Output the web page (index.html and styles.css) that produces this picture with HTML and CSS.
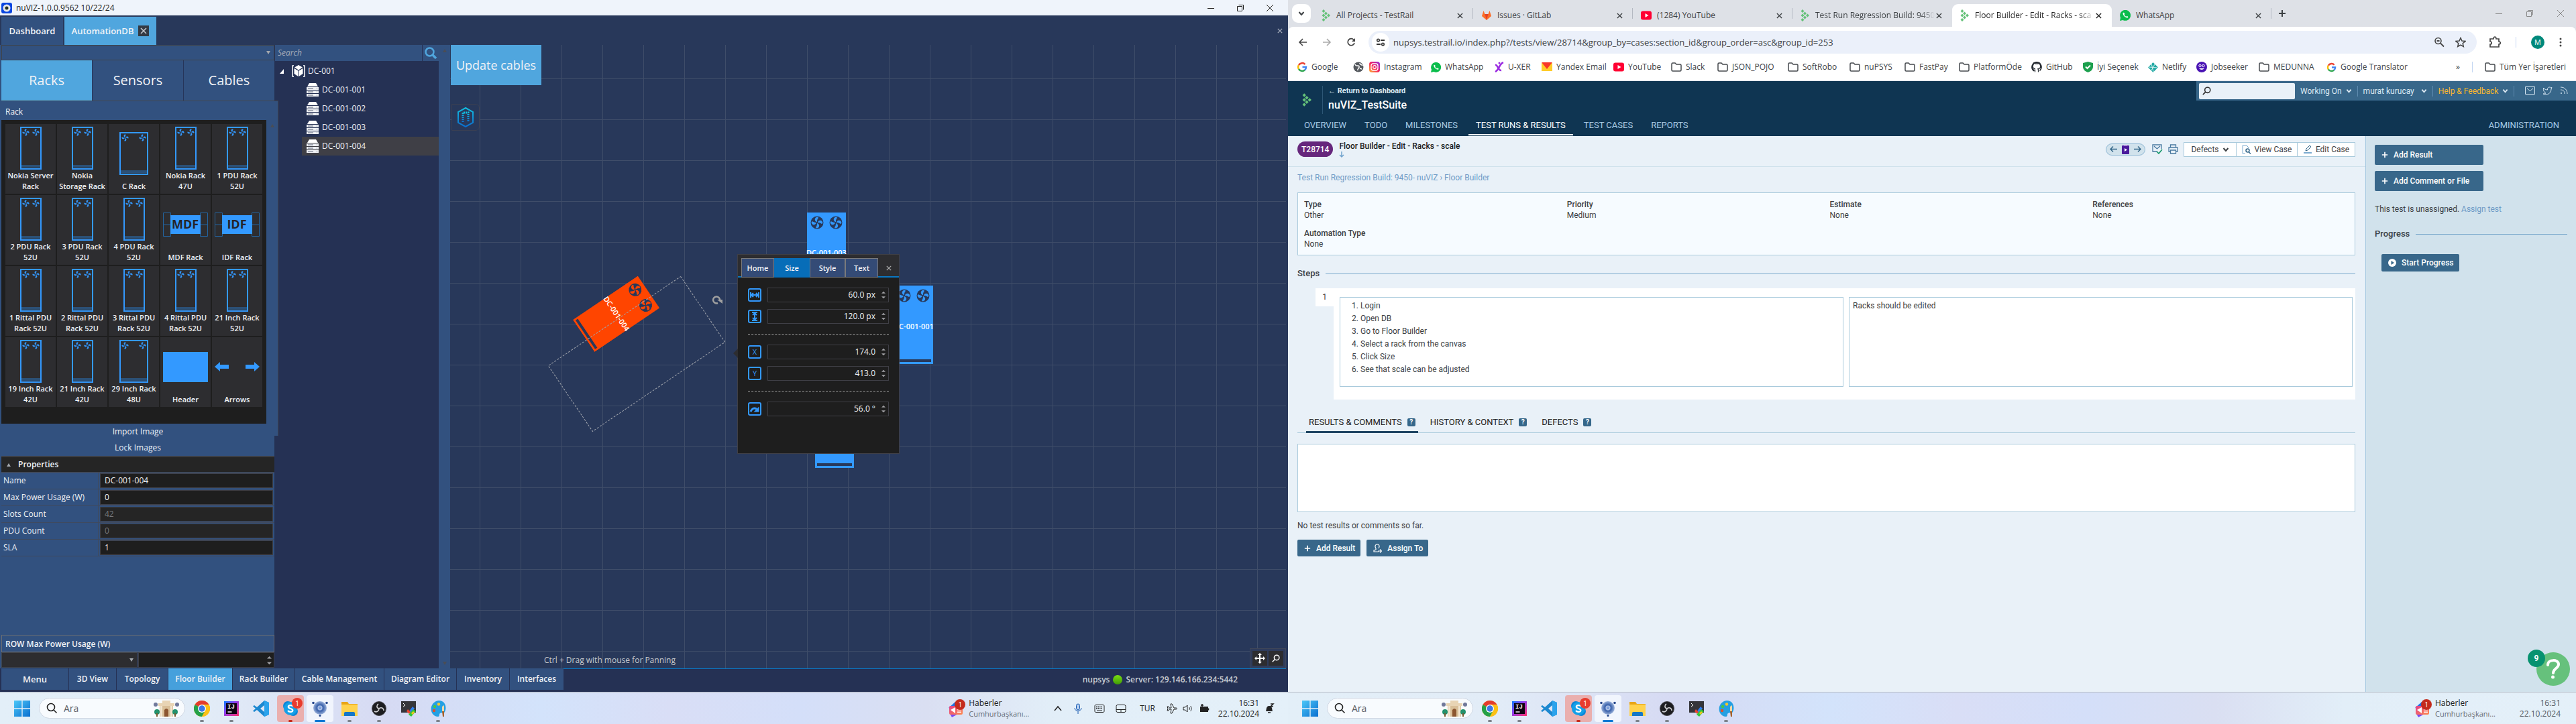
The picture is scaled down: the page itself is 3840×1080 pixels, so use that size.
FILE: index.html
```html
<!DOCTYPE html>
<html lang="tr">
<head>
<meta charset="utf-8">
<title>nuVIZ and TestRail</title>
<link rel="stylesheet" href="styles.css">
</head>
<body>
<svg class="defs" aria-hidden="true">
  <defs>
    <linearGradient id="gWin" x1="0" y1="0" x2="1" y2="1"><stop offset="0" stop-color="#4cc8f8"/><stop offset="1" stop-color="#0a6fd0"/></linearGradient>
    <linearGradient id="gInsta" x1="0" y1="1" x2="1" y2="0"><stop offset="0" stop-color="#fdb833"/><stop offset=".5" stop-color="#f5225f"/><stop offset="1" stop-color="#8a2be2"/></linearGradient>
    <linearGradient id="gIj" x1="0" y1="0" x2="1" y2="1"><stop offset="0" stop-color="#0a7cff"/><stop offset=".4" stop-color="#8a3ef0"/><stop offset="1" stop-color="#fc2f6c"/></linearGradient>
    <linearGradient id="gNews" x1="0" y1="0" x2="1" y2="1"><stop offset="0" stop-color="#e0408c"/><stop offset="1" stop-color="#ff8a4c"/></linearGradient>
    <linearGradient id="gHex" x1="0" y1="0" x2="0" y2="1"><stop offset="0" stop-color="#13bede"/><stop offset="1" stop-color="#0b6fd0"/></linearGradient>
    <radialGradient id="gSet"><stop offset="0" stop-color="#8fb0e8"/><stop offset=".5" stop-color="#3e64ac"/><stop offset="1" stop-color="#9db4dc"/></radialGradient>
  </defs>
  <symbol id="fan" viewBox="0 0 20 20"><path d="M10 9C6 8 5 3 9 1c3-1 4 1 2 3-1 2-1 3-1 5zM11 10c1-4 6-5 8-1 1 3-1 4-3 2-2-1-3-1-5-1zM10 11c4 1 5 6 1 8-3 1-4-1-2-3 1-2 1-3 1-5zM9 10c-1 4-6 5-8 1-1-3 1-4 3-2 2 1 3 1 5 1z"/></symbol>
  <symbol id="rack" viewBox="0 0 32 64"><path d="M1 1h30v62H1z" fill="none" stroke="#3399ff" stroke-width="2"/><path d="M2 58h28M2 60h28" stroke="#2a75bd"/><g fill="#3399ff"><use href="#fan" x="3" y="3" width="11" height="11"/><use href="#fan" x="18" y="3" width="11" height="11"/></g></symbol>
  <symbol id="rackw" viewBox="0 0 43 64"><path d="M1 1h41v62H1z" fill="none" stroke="#3399ff" stroke-width="2"/><path d="M2 58h39M2 60h39" stroke="#2a75bd"/><g fill="#3399ff"><use href="#fan" x="3" y="3" width="11" height="11"/><use href="#fan" x="29" y="3" width="11" height="11"/></g></symbol>
  <symbol id="rackfull" viewBox="0 0 58 117"><path d="M0 0h58v117H0z"/><path d="M3 110h52v4H3z" fill="#28385a"/><circle cx="15" cy="15" r="9.500" fill="#28385a"/><circle cx="43" cy="15" r="9.500" fill="#28385a"/><use href="#fan" x="6" y="6" width="18" height="18"/><use href="#fan" x="34" y="6" width="18" height="18"/></symbol>
  <symbol id="server" viewBox="0 0 18 21"><path d="M4 0h10l3 5H1z" fill="#fff"/><path d="M0 6h18v4H0zM0 11h18v4H0zM0 16h18v4H0z" fill="#eef0f4"/><path d="M2 8h8M2 13h8M2 18h8M15 8h1M15 13h1M15 18h1" stroke="#5c6478"/></symbol>
  <symbol id="testrail" viewBox="0 0 14 18"><g fill="#65c179"><path d="M3 0l2.500 2.500L3 5 .5 2.500zM6.500 3.500L9 6 6.500 8.500 4 6zM10.500 6.500L13 9l-2.500 2.500L8 9zM6.500 9.500L9 12l-2.500 2.500L4 12zM3 13l2.500 2.500L3 18 .5 15.500zM3 6.500L5.500 9 3 11.500.5 9z"/></g></symbol>
  <symbol id="x" viewBox="0 0 10 10"><path d="M1 1l8 8M9 1L1 9" stroke="currentColor" stroke-width="1.500" fill="none"/></symbol>
  <symbol id="chev" viewBox="0 0 10 10"><path d="M1.500 3L5 7l3.500-4" stroke="currentColor" stroke-width="2" fill="none"/></symbol>
  <symbol id="plus" viewBox="0 0 12 12"><path d="M6 1v10M1 6h10" stroke="currentColor" stroke-width="2"/></symbol>
  <symbol id="folder" viewBox="0 0 16 14"><path d="M1 2.500C1 1.500 1.500 1 2.500 1h3.500l2 2h5.500c1 0 1.500.500 1.500 1.500v7c0 1-.500 1.500-1.500 1.500h-11C1.500 13 1 12.500 1 11.500z" fill="none" stroke="#45494e" stroke-width="1.500"/></symbol>
  <symbol id="youtube" viewBox="0 0 16 16"><rect width="16" height="13" y="1.500" rx="3" fill="#f03"/><path d="M6.500 5v6l5-3z" fill="#fff"/></symbol>
  <symbol id="whatsapp" viewBox="0 0 16 16"><path d="M0 16l1-4.500A8 8 0 1 1 4.500 15z" fill="#0bbd4c"/><path d="M5 4c-2 2 3 8 6.500 7.500 2-1 0-2.500-1-2.500l-1 .800C8 9 7 8 6.500 7l.700-1C7 4.500 6 3.500 5 4z" fill="#fff"/></symbol>
  <symbol id="google" viewBox="0 0 16 16"><g fill="none" stroke-width="2.500"><path d="M12.500 4A6 6 0 0 0 3 5" stroke="#ea4335"/><path d="M3 5a6 6 0 0 0 0 6" stroke="#fbbc04"/><path d="M3 11a6 6 0 0 0 9 1.500" stroke="#34a853"/><path d="M12 12.500A6 6 0 0 0 14 8H8.500" stroke="#4285f4"/></g></symbol>
  <symbol id="mag" viewBox="0 0 16 16"><circle cx="9.500" cy="6.500" r="5" fill="none" stroke="currentColor" stroke-width="2"/><path d="M6 10l-5 5" stroke="currentColor" stroke-width="2"/></symbol>
  <symbol id="spin" viewBox="0 0 8 16"><path d="M0 5l4-4 4 4zM0 11l4 4 4-4z" fill="#a0a0a4"/></symbol>
  <symbol id="i-win" viewBox="0 0 24 24"><path d="M0 0h11.300v11.300H0zM12.700 0H24v11.300H12.700zM0 12.700h11.300V24H0zM12.700 12.700H24V24H12.700z" fill="url(#gWin)"/></symbol>
  <symbol id="i-castle" viewBox="0 0 40 26"><path d="M10 8h20v17H10z" fill="#d9bf98"/><path d="M8 5h24v4H8zM14 1h12v5H14z" fill="#e8d4b4"/><path d="M11 9h3v16h-3zM26 9h3v16h-3z" fill="#f2e6d0"/><path d="M17 25V15q3-4 6 0v10z" fill="#8c5630"/><circle cx="6" cy="18" r="4" fill="#23926d"/><circle cx="33" cy="18" r="4" fill="#23926d"/><path d="M6 20v5M33 20v5" stroke="#7a5a30" stroke-width="2"/><circle cx="4" cy="7" r="3" fill="#70789a"/><circle cx="36" cy="7" r="3" fill="#70789a"/></symbol>
  <symbol id="i-chrome" viewBox="0 0 24 24"><circle cx="12" cy="12" r="12" fill="#fbc116"/><path d="M12 12L1.600 6A12 12 0 0 1 22.400 6z" fill="#e33b2e"/><path d="M12 12L1.600 6A12 12 0 0 0 12 24l5-9z" fill="#24a148"/><path d="M12 6h10.400A12 12 0 0 1 12 24l5.200-9z" fill="#fbc116"/><circle cx="12" cy="12" r="6" fill="#fff"/><circle cx="12" cy="12" r="4.700" fill="#3b78e7"/></symbol>
  <symbol id="i-ij" viewBox="0 0 24 24"><path d="M1 1h22v22H1z" fill="url(#gIj)"/><path d="M4 4h16v16H4z" fill="#0c0312"/><text x="6" y="12" fill="#fff" font-family="Liberation Mono" font-size="9" font-weight="700">IJ</text><path d="M6.500 17h6" stroke="#fff" stroke-width="1.400"/></symbol>
  <symbol id="i-code" viewBox="0 0 24 24"><path d="M17 0l7 3v18l-7 3L6 14l-4 3-2-1.500L4 12 0 8.500 2 7l4 3zM17 7l-6 5 6 5z" fill="#1c88d0" fill-rule="evenodd"/><path d="M17 0l7 3v18l-7 3z" fill="#2ba3ec"/></symbol>
  <symbol id="i-skype" viewBox="0 0 24 24"><circle cx="8" cy="8" r="7" fill="#0b86d8"/><circle cx="16" cy="16" r="7" fill="#0b86d8"/><circle cx="12" cy="12" r="10" fill="#14a0e8"/><path d="M15.500 8.500C14 6.500 9 6.500 8.800 9.500c0 3 6.500 2 6.500 5 0 3-5.500 3-7.200.500" stroke="#fff" stroke-width="2.300" fill="none"/></symbol>
  <symbol id="i-set" viewBox="0 0 24 24"><circle cx="12" cy="11" r="10" fill="url(#gSet)"/><circle cx="12" cy="11" r="3" fill="none" stroke="#cfdcf5"/><g fill="#23458c"><circle cx="2" cy="3.500" r="1.800"/><circle cx="22" cy="3.500" r="1.800"/><circle cx="12" cy="22.500" r="1.500"/></g></symbol>
  <symbol id="i-folder" viewBox="0 0 24 24"><path d="M0 2h9l2 3h13v18H0z" fill="#e8a517"/><path d="M0 6h24v17H0z" fill="#ffd24d"/><path d="M4 23v-4q0-2 2-2h12q2 0 2 2v4z" fill="#1577c8"/></symbol>
  <symbol id="i-obs" viewBox="0 0 24 24"><circle cx="12" cy="12" r="10.500" fill="#1d1d20" stroke="#4a4a50"/><path d="M12 12c-4-1-4-5-1-7M12 12c4-3 7 0 7 3M12 12c0 4-4 6-7 4" stroke="#cfcfd2" stroke-width="1.600" fill="none"/></symbol>
  <symbol id="i-term" viewBox="0 0 24 24"><path d="M1 1h22v17H1z" fill="#35353a"/><path d="M4 4l3 3-3 2" stroke="#fff" fill="none"/><path d="M12 17l6-8 3 3-6 7z" fill="#2d7df5"/><path d="M11 13l4 4-2 3-4-4z" fill="#e8442e"/><path d="M19 13l4 3-7 8-4-3z" fill="#31c83a"/><path d="M16 19l3-3 2 2-3 3z" fill="#f7c51c"/></symbol>
  <symbol id="i-paint" viewBox="0 0 24 24"><path d="M13 0C24 0 25 12 22 17c-2 3-5 0-7 2-2 1 0 5-3 5C-2 23-2 2 13 0z" fill="#25a0e2"/><circle cx="7" cy="9" r="2.200" fill="#47c846"/><circle cx="13" cy="5.500" r="2.200" fill="#f5c82c"/><circle cx="6" cy="15" r="2.200" fill="#e2502d"/><path d="M18 9l3-2v9h-3z" fill="#f0d8a8"/><path d="M18 16h3v8h-2z" fill="#a5622c"/></symbol>
  <symbol id="i-news" viewBox="0 0 24 28"><path d="M1 13l10-9 9 4-3 8z" fill="#1c74e8"/><path d="M2 20h17l-13 7z" fill="#7b4bf2"/><rect x="2" y="10" width="20" height="13" rx="2" fill="url(#gNews)"/><path d="M4 16l7-4v9zM14 15h6v1.500h-6zM14 18.500h6V20h-6z" fill="#fff"/></symbol>
</svg>

<main class="desktop">
<section class="monitor">
  <div class="app">
    <header class="titlebar">
      <svg width="16" height="16" viewBox="0 0 16 16"><rect width="16" height="16" rx="3" fill="#0a46e0"/><circle cx="8" cy="8" r="5.500" fill="#e8e8e8"/><circle cx="8" cy="8" r="2.500" fill="#26331f"/></svg>
      <h1>nuVIZ-1.0.0.9562 10/22/24</h1>
      <div class="winctl"><button aria-label="Minimize"><svg width="10" height="10" viewBox="0 0 10 10"><path d="M0 5.500h10" stroke="#222"/></svg></button><button aria-label="Restore"><svg width="10" height="10" viewBox="0 0 10 10"><path d="M.5 2.500h7v7h-7zM2.500.5h7v7" fill="none" stroke="#222"/></svg></button><button aria-label="Close"><svg width="10" height="10" viewBox="0 0 10 10"><path d="M0 0l10 10M10 0L0 10" stroke="#222"/></svg></button></div>
    </header>
    <nav class="doctabs">
      <button class="doctab">Dashboard</button>
      <button class="doctab on">AutomationDB <span class="closebox"><svg width="10" height="10"><use href="#x"/></svg></span></button>
      <button class="dismiss" aria-label="Close document"><svg width="8" height="8"><use href="#x"/></svg></button>
    </nav>
    <div class="work">
      <div class="side">
        <button class="combo" aria-label="Category"><i class="tri"></i></button>
        <div class="kinds"><button class="on">Racks</button><button>Sensors</button><button>Cables</button></div>
        <section class="library">
          <h2>Rack</h2>
          <div class="shelf">
            <ul class="cells">
              <li><svg width="32" height="64"><use href="#rack"/></svg><span>Nokia Server<br>Rack</span></li>
              <li><svg width="32" height="64"><use href="#rack"/></svg><span>Nokia<br>Storage Rack</span></li>
              <li><svg width="43" height="64"><use href="#rackw"/></svg><span>C Rack</span></li>
              <li><svg width="32" height="64"><use href="#rack"/></svg><span>Nokia Rack<br>47U</span></li>
              <li><svg width="32" height="64"><use href="#rack"/></svg><span>1 PDU Rack<br>52U</span></li>
              <li><svg width="32" height="64"><use href="#rack"/></svg><span>2 PDU Rack<br>52U</span></li>
              <li><svg width="32" height="64"><use href="#rack"/></svg><span>3 PDU Rack<br>52U</span></li>
              <li><svg width="32" height="64"><use href="#rack"/></svg><span>4 PDU Rack<br>52U</span></li>
              <li><svg width="67" height="36"><path d="M.5.5h11v35H.5zM55.500.5h11v35h-11zM.5 18h66" fill="none" stroke="#23649f"/><path d="M11 4h45v28H11z" fill="#3399ff"/><text x="33" y="24" class="tag">MDF</text></svg><span>MDF Rack</span></li>
              <li><svg width="67" height="36"><path d="M.5.5h11v35H.5zM55.500.5h11v35h-11zM.5 18h66" fill="none" stroke="#23649f"/><path d="M11 4h45v28H11z" fill="#3399ff"/><text x="33" y="24" class="tag">IDF</text></svg><span>IDF Rack</span></li>
              <li><svg width="32" height="64"><use href="#rack"/></svg><span>1 Rittal PDU<br>Rack 52U</span></li>
              <li><svg width="32" height="64"><use href="#rack"/></svg><span>2 Rittal PDU<br>Rack 52U</span></li>
              <li><svg width="32" height="64"><use href="#rack"/></svg><span>3 Rittal PDU<br>Rack 52U</span></li>
              <li><svg width="32" height="64"><use href="#rack"/></svg><span>4 Rittal PDU<br>Rack 52U</span></li>
              <li><svg width="32" height="64"><use href="#rack"/></svg><span>21 Inch Rack<br>52U</span></li>
              <li><svg width="32" height="64"><use href="#rack"/></svg><span>19 Inch Rack<br>42U</span></li>
              <li><svg width="32" height="64"><use href="#rack"/></svg><span>21 Inch Rack<br>42U</span></li>
              <li><svg width="43" height="64"><use href="#rackw"/></svg><span>29 Inch Rack<br>48U</span></li>
              <li><svg width="67" height="45"><path d="M0 0h67v45H0z" fill="#3399ff"/></svg><span>Header</span></li>
              <li><svg width="67" height="14"><path d="M0 7l8-7v4h13v6H8v4zM67 7l-8-7v4H46v6h13v4z" fill="#3399ff"/></svg><span>Arrows</span></li>
            </ul>
            <div class="scroll"><i class="tri up dark"></i></div>
          </div>
        </section>
        <div class="imgacts"><button>Import Image</button><button>Lock Images</button></div>
        <section class="props">
          <h2><i class="tri up"></i>Properties</h2>
          <div class="prop"><label for="p1">Name</label><input id="p1" value="DC-001-004"></div>
          <div class="prop"><label for="p2">Max Power Usage (W)</label><input id="p2" value="0"></div>
          <div class="prop"><label for="p3">Slots Count</label><input id="p3" value="42" disabled></div>
          <div class="prop"><label for="p4">PDU Count</label><input id="p4" value="0" disabled></div>
          <div class="prop"><label for="p5">SLA</label><input id="p5" value="1"></div>
        </section>
        <h3 class="rowmax">ROW Max Power Usage (W)</h3>
        <div class="rowset"><button class="combo dim" aria-label="Row"><i class="tri"></i></button><div class="num"><input aria-label="Row max power"><svg width="7" height="14"><use href="#spin"/></svg></div></div>
      </div>
      <div class="tree">
        <div class="find"><input placeholder="Search" aria-label="Search tree"><button aria-label="Search"><svg width="19" height="19" viewBox="0 0 19 19"><circle cx="7.500" cy="7.500" r="6" fill="none" stroke="#50a6de" stroke-width="2.500"/><path d="M12 12l5 5" stroke="#50a6de" stroke-width="3.500"/></svg></button></div>
        <ul>
          <li class="root"><svg width="6" height="7"><path d="M6 0v7H0z" fill="#fff"/></svg><svg width="20" height="18" viewBox="0 0 20 18"><path d="M3 1H1v16h2M17 1h2v16h-2" fill="none" stroke="#fff" stroke-width="1.500"/><path d="M10 0l6 3.500-6 4-6-4zM3.500 5L9.500 8.500V17l-6-4zM16.500 5l-6 3.500V17l6-4z" fill="#fff"/></svg>DC-001</li>
          <li><svg width="18" height="21"><use href="#server"/></svg>DC-001-001</li>
          <li><svg width="18" height="21"><use href="#server"/></svg>DC-001-002</li>
          <li><svg width="18" height="21"><use href="#server"/></svg>DC-001-003</li>
          <li class="sel"><svg width="18" height="21"><use href="#server"/></svg>DC-001-004</li>
        </ul>
      </div>
      <div class="scroll tall"><i class="tri up dark"></i><i class="tri dark"></i></div>
      <div class="canvas">
        <svg class="scene" width="1240" height="920">
          <g fill="#3399ff">
            <use href="#rackfull" x="532" y="250" width="58" height="117"/>
            <use href="#rackfull" x="662" y="359" width="58" height="117"/>
            <use href="#rackfull" x="544" y="514" width="58" height="117"/>
          </g>
          <text x="561" y="314">DC-001-003</text>
          <text x="691" y="424">DC-001-001</text>
          <g transform="translate(248 401) rotate(56)"><use href="#rackfull" x="-29" y="-58" width="58" height="117" fill="#ff4500"/><text x="0" y="4">DC-001-004</text></g>
          <rect x="-59" y="-119" width="118" height="238" transform="translate(278 461) rotate(56)" fill="none" stroke="#a0a4ac" stroke-dasharray="3 2"/>
          <path d="M399 385a5 5 0 1 1 3-4" fill="none" stroke="#a0a0a0" stroke-width="2.500"/><path d="M398 380h8v6z" fill="#a0a0a0"/>
        </svg>
        <button class="update">Update cables</button>
        <button class="badge" aria-label="nuPSYS"><svg width="26" height="30" viewBox="0 0 26 30"><path d="M13 1l11 6v16l-11 6-11-6V7z" fill="none" stroke="url(#gHex)" stroke-width="2"/><path d="M9 22V8h8v14" fill="none" stroke="url(#gHex)" stroke-width="3" stroke-dasharray="2 1"/></svg></button>
        <p class="hint">Ctrl + Drag with mouse for Panning</p>
        <div class="tools"><button aria-label="Pan"><svg width="16" height="16" viewBox="0 0 16 16"><path d="M8 1v14M1 8h14" stroke="#fff" stroke-width="2"/><path d="M8 0l3 3H5zM8 16l3-3H5zM0 8l3-3v6zM16 8l-3-3v6z" fill="#fff"/></svg></button><button aria-label="Zoom"><svg width="12" height="12"><use href="#mag"/></svg></button></div>
        <div class="popup">
          <div class="poptabs"><button>Home</button><button class="on">Size</button><button>Style</button><button>Text</button><button class="popx" aria-label="Close"><svg width="8" height="8"><use href="#x"/></svg></button></div>
          <div class="popbody">
            <div class="field"><svg class="ic" width="20" height="20" viewBox="0 0 20 20"><path d="M4 6v8M16 6v8M5 10h10M8 7l-3 3 3 3M12 7l3 3-3 3"/></svg><div class="num"><input aria-label="Width" value="60.0 px"><svg width="6" height="14"><use href="#spin"/></svg></div></div>
            <div class="field"><svg class="ic" width="20" height="20" viewBox="0 0 20 20"><path d="M6 4h8M6 16h8M10 5v10M7 8l3-3 3 3M7 12l3 3 3-3"/></svg><div class="num"><input aria-label="Height" value="120.0 px"><svg width="6" height="14"><use href="#spin"/></svg></div></div>
            <hr>
            <div class="field"><svg class="ic" width="20" height="20" viewBox="0 0 20 20"><text x="10" y="14">X</text></svg><div class="num"><input aria-label="X" value="174.0"><svg width="6" height="14"><use href="#spin"/></svg></div></div>
            <div class="field"><svg class="ic" width="20" height="20" viewBox="0 0 20 20"><text x="10" y="14">Y</text></svg><div class="num"><input aria-label="Y" value="413.0"><svg width="6" height="14"><use href="#spin"/></svg></div></div>
            <hr>
            <div class="field"><svg class="ic" width="20" height="20" viewBox="0 0 20 20"><path d="M4 14c2-5 5-6 9-4" stroke-width="3"/><path d="M16.500 6.500v8h-8z" fill="#3399ff" stroke="none"/></svg><div class="num"><input aria-label="Rotation" value="56.0 °"><svg width="6" height="14"><use href="#spin"/></svg></div></div>
          </div>
        </div>
      </div>
    </div>
    <footer class="modes">
      <button class="first">Menu</button><button>3D View</button><button>Topology</button><button class="on">Floor Builder</button><button>Rack Builder</button><button>Cable Management</button><button>Diagram Editor</button><button>Inventory</button><button>Interfaces</button>
      <p class="status">nupsys <i></i> Server: 129.146.166.234:5442</p>
    </footer>
  </div>
  <footer class="taskbar">
    <button class="start" aria-label="Start"><svg width="24" height="24"><use href="#i-win"/></svg></button>
    <label class="tsearch"><svg width="17" height="17" viewBox="0 0 17 17"><circle cx="7" cy="7" r="5.500" fill="none" stroke="#222" stroke-width="1.600"/><path d="M11 11l4.500 4.500" stroke="#222" stroke-width="1.600"/></svg><input placeholder="Ara" aria-label="Ara"><svg width="40" height="26"><use href="#i-castle"/></svg></label>
    <div class="apps">
      <button class="run" aria-label="Chrome"><svg width="24" height="24"><use href="#i-chrome"/></svg></button><button class="run" aria-label="IntelliJ"><svg width="24" height="24"><use href="#i-ij"/></svg></button><button aria-label="VS Code"><svg width="24" height="24"><use href="#i-code"/></svg></button><button class="run alert" aria-label="Skype"><svg width="24" height="24"><use href="#i-skype"/></svg><b class="cnt">1</b></button><button class="run cur" aria-label="nuVIZ"><svg width="24" height="24"><use href="#i-set"/></svg></button><button class="run" aria-label="Files"><svg width="24" height="24"><use href="#i-folder"/></svg></button><button class="run" aria-label="OBS"><svg width="24" height="24"><use href="#i-obs"/></svg></button><button aria-label="Terminal"><svg width="24" height="24"><use href="#i-term"/></svg></button><button class="run" aria-label="Paint"><svg width="24" height="24"><use href="#i-paint"/></svg></button>
    </div>
    <div class="news"><span class="newsic"><svg width="24" height="28"><use href="#i-news"/></svg><b class="cnt">1</b></span><p>Haberler<br><small>Cumhurbaşkanı...</small></p></div>
    <div class="tray">
      <svg width="12" height="12" viewBox="0 0 12 12"><path d="M1 9l5-6 5 6" fill="none" stroke="#222" stroke-width="1.500"/></svg>
      <svg width="16" height="16" viewBox="0 0 16 16"><rect x="5.500" y="1" width="5" height="9" rx="2.500" fill="#b9d2f2" stroke="#1658b0"/><path d="M3 7c0 6 10 6 10 0M8 12v4" fill="none" stroke="#1658b0"/></svg>
      <svg width="16" height="16" viewBox="0 0 16 16"><rect x="1" y="2.500" width="14" height="11" rx="1.500" fill="none" stroke="#222"/><path d="M3 5.500h10M3 8h10" stroke="#222" stroke-width="1.500" stroke-dasharray="1.500 1"/><path d="M4 11h8" stroke="#222"/></svg>
      <svg width="16" height="16" viewBox="0 0 16 16"><rect x="1" y="2.500" width="14" height="11" rx="2" fill="none" stroke="#222"/><path d="M1 9.500h14M8 9.500v4" stroke="#222"/></svg>
      <span class="lang">TUR</span>
      <span class="trio"><svg width="16" height="16" viewBox="0 0 16 16"><path d="M6 1h2l3 6h3c2 0 2 2 0 2h-3l-3 6H6l1-6H4l-1 2H1l1-3-1-3h2l1 2h3z" fill="none" stroke="#222"/></svg><svg width="16" height="16" viewBox="0 0 16 16"><path d="M1 6h2.500L7 3v10l-3.500-3H1zM9.500 6c1 1 1 3 0 4M11.500 4c2 2 2 6 0 8" fill="none" stroke="#222"/></svg><svg width="16" height="16" viewBox="0 0 16 16"><path d="M2 5h12v8H2z" fill="#222"/><path d="M14.500 7.500v3M5 1v6M3 3h4" stroke="#222" stroke-width="1.500"/></svg></span>
    </div>
    <p class="clock">16:31<br>22.10.2024</p>
    <svg class="bell" width="15" height="16" viewBox="0 0 15 16"><path d="M2 12c1-2 0-8 5-8s4 6 5 8z" fill="#222"/><path d="M5 14h4M9 1h4L9 5h4" stroke="#222" stroke-width="1.500" fill="none"/></svg>
  </footer>
</section>

<section class="monitor">
  <div class="browser">
    <header class="strip">
      <button class="tabmenu" aria-label="Search tabs"><svg width="10" height="10"><use href="#chev"/></svg></button>
      <div class="btabs">
        <div class="btab"><svg width="14" height="18"><use href="#testrail"/></svg><span>All Projects - TestRail</span><button aria-label="Close tab"><svg width="9" height="9"><use href="#x"/></svg></button></div>
        <div class="btab"><svg width="16" height="16" viewBox="0 0 16 16"><path d="M1 9L3.500 1 5.500 6h5L12.500 1 15 9l-7 6z" fill="#fc6d26"/><path d="M8 15L5.500 6h5z" fill="#e24329"/></svg><span>Issues · GitLab</span><button aria-label="Close tab"><svg width="9" height="9"><use href="#x"/></svg></button></div>
        <div class="btab"><svg width="16" height="16"><use href="#youtube"/></svg><span>(1284) YouTube</span><button aria-label="Close tab"><svg width="9" height="9"><use href="#x"/></svg></button></div>
        <div class="btab last"><svg width="14" height="18"><use href="#testrail"/></svg><span class="fade">Test Run Regression Build: 9450</span><button aria-label="Close tab"><svg width="9" height="9"><use href="#x"/></svg></button></div>
        <div class="btab on"><svg width="14" height="18"><use href="#testrail"/></svg><span class="fade">Floor Builder - Edit - Racks - sca</span><button aria-label="Close tab"><svg width="9" height="9"><use href="#x"/></svg></button></div>
        <div class="btab"><svg width="16" height="16"><use href="#whatsapp"/></svg><span>WhatsApp</span><button aria-label="Close tab"><svg width="9" height="9"><use href="#x"/></svg></button></div>
      </div>
      <button class="newtab" aria-label="New tab"><svg width="12" height="12"><use href="#plus"/></svg></button>
      <div class="winctl"><button aria-label="Minimize"><svg width="10" height="10" viewBox="0 0 10 10"><path d="M0 5.500h10" stroke="#888"/></svg></button><button aria-label="Restore"><svg width="10" height="10" viewBox="0 0 10 10"><path d="M.5 2.500h7v7h-7zM2.500.5h7v7" fill="none" stroke="#888"/></svg></button><button aria-label="Close"><svg width="10" height="10" viewBox="0 0 10 10"><path d="M0 0l10 10M10 0L0 10" stroke="#888"/></svg></button></div>
    </header>
    <div class="bar">
      <button aria-label="Back"><svg width="14" height="14" viewBox="0 0 14 14"><path d="M13 7H2M7 2L2 7l5 5" fill="none" stroke="#444" stroke-width="1.600"/></svg></button>
      <button aria-label="Forward"><svg width="14" height="14" viewBox="0 0 14 14"><path d="M1 7h11M7 2l5 5-5 5" fill="none" stroke="#aaa" stroke-width="1.600"/></svg></button>
      <button aria-label="Reload"><svg width="14" height="14" viewBox="0 0 14 14"><path d="M12 8A5 5 0 1 1 11 3.500" fill="none" stroke="#444" stroke-width="1.700"/><path d="M13 1v5H8z" fill="#444"/></svg></button>
      <div class="omni"><span class="tune"><svg width="14" height="14" viewBox="0 0 14 14"><path d="M7 4h6M1 10h6" stroke="#333" stroke-width="1.800"/><circle cx="3.500" cy="4" r="1.800" fill="none" stroke="#333" stroke-width="1.500"/><circle cx="10.500" cy="10" r="1.800" fill="none" stroke="#333" stroke-width="1.500"/></svg></span>
        <input aria-label="Address" value="nupsys.testrail.io/index.php?/tests/view/28714&amp;group_by=cases:section_id&amp;group_order=asc&amp;group_id=253">
        <button aria-label="Zoom"><svg width="16" height="16" viewBox="0 0 16 16"><circle cx="6.500" cy="6" r="4.500" fill="none" stroke="#444" stroke-width="1.600"/><path d="M10 9.500l5 5M4.500 6h4" stroke="#444" stroke-width="1.800"/></svg></button>
        <button aria-label="Bookmark"><svg width="16" height="16" viewBox="0 0 16 16"><path d="M8 1.500l2 4.500 5 .500-3.800 3.200L12.300 14.500 8 12l-4.300 2.500L4.800 9.700 1 6.500 6 6z" fill="none" stroke="#444" stroke-width="1.500"/></svg></button></div>
      <button aria-label="Extensions"><svg width="18" height="18" viewBox="0 0 18 18"><path d="M2 4h5c0-4 4-4 4 0h4v4c3 0 3 4 0 4v4H2v-4c3 0 3-4 0-4z" fill="none" stroke="#444" stroke-width="1.700"/></svg></button>
      <i class="vsep"></i>
      <button class="avatar">M</button>
      <button aria-label="Menu"><svg width="4" height="16" viewBox="0 0 4 16"><g fill="#444"><circle cx="2" cy="3" r="1.500"/><circle cx="2" cy="8" r="1.500"/><circle cx="2" cy="13" r="1.500"/></g></svg></button>
    </div>
    <nav class="marks">
      <a href="#"><svg width="16" height="16"><use href="#google"/></svg>Google</a>
      <a href="#" aria-label="Site"><svg width="16" height="16" viewBox="0 0 16 16"><circle cx="8" cy="8" r="7.500" fill="#55595e"/><path d="M3 4c2 5 5 0 6 3s-3 3-2 6M10 2c0 3 3 2 4 4M10 10l3 1" stroke="#fff" stroke-width="1.600" fill="none"/></svg></a>
      <a href="#"><svg width="16" height="16" viewBox="0 0 16 16"><rect width="16" height="16" rx="4" fill="url(#gInsta)"/><rect x="3" y="3" width="10" height="10" rx="3" fill="none" stroke="#fff" stroke-width="1.300"/><circle cx="8" cy="8" r="2.300" fill="none" stroke="#fff" stroke-width="1.300"/></svg>Instagram</a>
      <a href="#"><svg width="15" height="15"><use href="#whatsapp"/></svg>WhatsApp</a>
      <a href="#"><svg width="15" height="16" viewBox="0 0 15 16"><path d="M2 5c4-1 4 9 9 8M14 1C8 3 8 12 2 15" fill="none" stroke="#9a2be0" stroke-width="2.500"/><circle cx="8" cy="2" r="1.500" fill="#9a2be0"/></svg>U-XER</a>
      <a href="#"><svg width="16" height="14" viewBox="0 0 16 14"><path d="M0 1h16v12H0z" fill="#ffcc29"/><path d="M0 0h16L8 10z" fill="#f8372a"/></svg>Yandex Email</a>
      <a href="#"><svg width="16" height="16"><use href="#youtube"/></svg>YouTube</a>
      <a href="#"><svg width="16" height="14"><use href="#folder"/></svg>Slack</a>
      <a href="#"><svg width="16" height="14"><use href="#folder"/></svg>JSON_POJO</a>
      <a href="#"><svg width="16" height="14"><use href="#folder"/></svg>SoftRobo</a>
      <a href="#"><svg width="16" height="14"><use href="#folder"/></svg>nuPSYS</a>
      <a href="#"><svg width="16" height="14"><use href="#folder"/></svg>FastPay</a>
      <a href="#"><svg width="16" height="14"><use href="#folder"/></svg>PlatformÖde</a>
      <a href="#"><svg width="16" height="16" viewBox="0 0 16 16"><path d="M5.500 15.500v-3c-2 .500-3-1-3.500-2M10.500 15.500v-3c0-1 0-1-.5-1.500 5-1 4-5 3-6.500 0-1 0-2-.3-2.500-1 0-2 1-2.200 1h-5C5 2.500 4 2 3.300 2 3 2.500 3 3.500 3 4.500 2 6 1 10 6 11" fill="none" stroke="#24292f" stroke-width="1.300"/><circle cx="8" cy="8" r="7" fill="none" stroke="#24292f" stroke-width="1.800" stroke-dasharray="35 9" stroke-dashoffset="-15"/></svg>GitHub</a>
      <a href="#"><svg width="15" height="16" viewBox="0 0 15 16"><path d="M7.500 0L15 2v6q0 5-7.500 8Q0 13 0 8V2z" fill="#1da04e"/><path d="M4 7.500l2.500 2.500L11 5.500" stroke="#fff" stroke-width="2" fill="none"/></svg>İyi Seçenek</a>
      <a href="#"><svg width="15" height="15" viewBox="0 0 15 15"><path d="M7.500 0L15 7.500 7.500 15 0 7.500z" fill="#22a9a4"/><path d="M1 7l13 1M5 2l3 12M10 3L5 12" stroke="#d8f2f0"/></svg>Netlify</a>
      <a href="#"><svg width="16" height="16" viewBox="0 0 16 16"><circle cx="8" cy="8" r="8" fill="#4a14b4"/><circle cx="5.500" cy="6" r="1.700" fill="none" stroke="#fff"/><circle cx="10.500" cy="6" r="1.700" fill="none" stroke="#fff"/><path d="M4 10q4 4 8 0z" fill="#fff"/></svg>Jobseeker</a>
      <a href="#"><svg width="16" height="14"><use href="#folder"/></svg>MEDUNNA</a>
      <a href="#"><svg width="15" height="15"><use href="#google"/></svg>Google Translator</a>
      <span class="more"><button aria-label="More bookmarks">»</button><i class="vsep"></i><a href="#"><svg width="16" height="14"><use href="#folder"/></svg>Tüm Yer İşaretleri</a></span>
    </nav>

    <div class="testrail">
      <header class="trhead">
        <div class="brand"><svg width="15" height="20"><use href="#testrail"/></svg><div><a href="#">← Return to Dashboard</a><h2>nuVIZ_TestSuite</h2></div></div>
        <div class="userbar"><label class="trsearch"><svg width="13" height="13"><use href="#mag"/></svg><input aria-label="Search"></label>
          <button>Working On <svg width="9" height="9"><use href="#chev"/></svg></button><button>murat kurucay <svg class="far" width="9" height="9"><use href="#chev"/></svg></button><button class="gold">Help &amp; Feedback <svg width="9" height="9"><use href="#chev"/></svg></button>
          <span class="soc"><svg width="15" height="12" viewBox="0 0 15 12"><path d="M.5.5h14v11H.5zM3 3l4.500 3.500L12 3" fill="none" stroke="#d6e6f2"/></svg><svg width="15" height="13" viewBox="0 0 15 13"><path d="M1 11c2 0 3-.500 4-1C2 9 1 5 1.500 2 3 4 5 5 7.500 5 7 1 11 0 12.500 2L14 1.500 13 4c0 6-6 10-12 7z" fill="none" stroke="#d6e6f2"/></svg><svg width="12" height="12" viewBox="0 0 12 12"><path d="M1 1c6 0 10 4 10 10M1 5c4 0 6 2 6 6" fill="none" stroke="#d6e6f2"/><circle cx="2" cy="10" r="1" fill="#d6e6f2"/></svg></span></div>
        <nav class="trnav"><a href="#">OVERVIEW</a><a href="#">TODO</a><a href="#">MILESTONES</a><a href="#" class="on">TEST RUNS &amp; RESULTS</a><a href="#">TEST CASES</a><a href="#">REPORTS</a><a href="#" class="admin">ADMINISTRATION</a></nav>
      </header>
      <div class="trmain">
        <div class="content">
          <div class="head"><span class="tid">T28714</span><h3>Floor Builder - Edit - Racks - scale<svg width="8" height="9" viewBox="0 0 8 9"><path d="M4 0v8M1 5l3 3 3-3" fill="none" stroke="#6fa2cc" stroke-width="1.500"/></svg></h3>
            <div class="acts">
              <div class="pager"><button aria-label="Previous"><svg width="11" height="9" viewBox="0 0 11 9"><path d="M11 4.500H1M5 .5l-4 4 4 4" fill="none" stroke="#35678a" stroke-width="1.500"/></svg></button><svg width="11" height="14" viewBox="0 0 11 14"><rect y="1" width="11" height="13" rx="1" fill="#4a1a9c"/><path d="M4 5v5l4-2.500z" fill="#fff"/><path d="M3 0h5v2H3z" fill="#b38be0"/></svg><button aria-label="Next"><svg width="11" height="9" viewBox="0 0 11 9"><path d="M0 4.500h10M6 .5l4 4-4 4" fill="none" stroke="#35678a" stroke-width="1.500"/></svg></button></div>
              <button aria-label="Subscribe"><svg width="16" height="15" viewBox="0 0 16 15"><path d="M8 11H1V1h13v6M3 3l4.500 4L12 3" fill="none" stroke="#4a7aa0" stroke-width="1.300"/><path d="M7 11l3 3 5-6" fill="none" stroke="#199a6c" stroke-width="1.700"/></svg></button>
              <button aria-label="Print"><svg width="15" height="15" viewBox="0 0 15 15"><path d="M3.500 5V1h8v4M3.500 11H1V5h13v6h-2.500M3.500 9h8v5h-8z" fill="none" stroke="#4a7aa0" stroke-width="1.300"/></svg></button>
              <div class="group"><button>Defects <svg width="10" height="10"><use href="#chev"/></svg></button><button><svg width="14" height="14" viewBox="0 0 14 14"><path d="M5 13H1V1h6l3 3v1" fill="none" stroke="#7aaad0"/><circle cx="8.500" cy="8.500" r="2.500" fill="none" stroke="#35678a" stroke-width="1.500"/><path d="M10 10.500l3 3" stroke="#35678a" stroke-width="1.500"/></svg>View Case</button><button><svg width="14" height="13" viewBox="0 0 14 13"><path d="M4 9l1-3 5-5 2 2-5 5z" fill="none" stroke="#35678a"/><path d="M1 12h12" stroke="#7aaad0" stroke-width="2"/></svg>Edit Case</button></div>
            </div>
          </div>
          <div class="body">
            <p class="crumbs"><a href="#">Test Run Regression Build: 9450- nuVIZ</a> › <a href="#">Floor Builder</a></p>
            <dl class="facts"><div><dt>Type</dt><dd>Other</dd></div><div><dt>Priority</dt><dd>Medium</dd></div><div><dt>Estimate</dt><dd>None</dd></div><div><dt>References</dt><dd>None</dd></div><div><dt>Automation Type</dt><dd>None</dd></div></dl>
            <h4 class="rule">Steps</h4>
            <div class="step"><span class="no">1</span><div class="stepbody"><ol><li>Login</li><li>Open DB</li><li>Go to Floor Builder</li><li>Select a rack from the canvas</li><li>Click Size</li><li>See that scale can be adjusted</li></ol><p>Racks should be edited</p></div></div>
            <nav class="rtabs"><a href="#" class="on">RESULTS &amp; COMMENTS <b>?</b></a><a href="#">HISTORY &amp; CONTEXT <b>?</b></a><a href="#">DEFECTS <b>?</b></a></nav>
            <div class="results"></div>
            <p class="none">No test results or comments so far.</p>
            <div class="btns"><button class="solid"><svg width="10" height="10"><use href="#plus"/></svg>Add Result</button><button class="solid"><svg width="13" height="14" viewBox="0 0 13 14"><path d="M8 7c2-3 1-6-2-6S2 4 4 7v2l-3 1v2h7M7 11h5M10 8.500l2.500 2.500L10 13.500" fill="none" stroke="#fff" stroke-width="1.200"/></svg>Assign To</button></div>
          </div>
        </div>
        <aside class="rail">
          <button class="solid wide"><svg width="10" height="10"><use href="#plus"/></svg>Add Result</button>
          <button class="solid wide"><svg width="10" height="10"><use href="#plus"/></svg>Add Comment or File</button>
          <p>This test is unassigned. <a href="#">Assign test</a></p>
          <h4 class="rule">Progress</h4>
          <button class="solid prog"><svg width="12" height="12" viewBox="0 0 12 12"><circle cx="6" cy="6" r="6" fill="#fff"/><path d="M4.500 3v6L9 6z" fill="#35678a"/></svg>Start Progress</button>
          <button class="help" aria-label="Help"><svg width="50" height="50" viewBox="0 0 50 50"><circle cx="25" cy="25" r="25" fill="#66c17c"/><path d="M17 19c0-9 16-9 16-1 0 6-8 6-8 13" fill="none" stroke="#fff" stroke-width="4" stroke-linecap="round"/><circle cx="24.500" cy="37" r="2.500" fill="#fff"/></svg><b>9</b></button>
        </aside>
      </div>
    </div>
  </div>
  <footer class="taskbar second">
    <button class="start" aria-label="Start"><svg width="24" height="24"><use href="#i-win"/></svg></button>
    <label class="tsearch"><svg width="17" height="17" viewBox="0 0 17 17"><circle cx="7" cy="7" r="5.500" fill="none" stroke="#222" stroke-width="1.600"/><path d="M11 11l4.500 4.500" stroke="#222" stroke-width="1.600"/></svg><input placeholder="Ara" aria-label="Ara"><svg width="40" height="26"><use href="#i-castle"/></svg></label>
    <div class="apps">
      <button class="run" aria-label="Chrome"><svg width="24" height="24"><use href="#i-chrome"/></svg></button><button class="run" aria-label="IntelliJ"><svg width="24" height="24"><use href="#i-ij"/></svg></button><button aria-label="VS Code"><svg width="24" height="24"><use href="#i-code"/></svg></button><button class="run alert" aria-label="Skype"><svg width="24" height="24"><use href="#i-skype"/></svg><b class="cnt">1</b></button><button class="run cur" aria-label="nuVIZ"><svg width="24" height="24"><use href="#i-set"/></svg></button><button class="run" aria-label="Files"><svg width="24" height="24"><use href="#i-folder"/></svg></button><button class="run" aria-label="OBS"><svg width="24" height="24"><use href="#i-obs"/></svg></button><button aria-label="Terminal"><svg width="24" height="24"><use href="#i-term"/></svg></button><button class="run" aria-label="Paint"><svg width="24" height="24"><use href="#i-paint"/></svg></button>
    </div>
    <div class="news"><span class="newsic"><svg width="24" height="28"><use href="#i-news"/></svg><b class="cnt">1</b></span><p>Haberler<br><small>Cumhurbaşkanı...</small></p></div>
    <p class="clock">16:31<br>22.10.2024</p>
  </footer>
</section>
</main>
</body>
</html>
```
FILE: styles.css
```css
* { box-sizing: border-box; margin: 0; padding: 0; }
body { font: 12px/16px "Open Sans", "Noto Sans", sans-serif; color: #f0f2f6; }
button, input { font: inherit; color: inherit; background: none; border: 0; min-width: 0; }
a { color: inherit; text-decoration: none; }
ul, ol { list-style: none; }
svg { display: block; flex: none; }
button { display: flex; align-items: center; justify-content: center; white-space: nowrap; }
.defs { position: absolute; width: 0; height: 0; }

.desktop { display: grid; grid-template-columns: 1fr 1fr; min-height: 100vh; }
.monitor { display: flex; flex-direction: column; min-width: 0; }

/* nuVIZ window */
.app { flex: 1; display: flex; flex-direction: column; background: #28385a; }
.titlebar { display: flex; align-items: center; height: 23px; padding: 0 22px 0 2px; gap: 6px; background: #eff4fb; color: #222; }
.titlebar h1 { font-size: 12px; font-weight: 400; flex: 1; }
.winctl { display: flex; gap: 34px; }
.doctabs { display: flex; gap: 2px; padding: 2px 8px 0 2px; height: 44px; font-size: 13px; font-weight: 600; }
.doctab { width: 92px; background: #32517f; }
.doctab.on { width: 137px; background: #50a6de; gap: 7px; }
.closebox { display: grid; place-items: center; width: 16px; height: 16px; background: #333a44; color: #c8ccd2; }
.dismiss { margin-left: auto; color: #a9b0bd; }
.work { flex: 1; display: flex; }
.side { width: 409px; padding-left: 2px; display: flex; flex-direction: column; background: #32517f; flex: none; }
.tri { width: 0; height: 0; border: 3px solid transparent; border-top: 5px solid #a3a7ad; border-bottom: 0; }
.tri.up { border-top: 0; border-bottom: 5px solid #a3a7ad; }
.tri.dark { border-top-color: #4a4d55; border-bottom-color: #4a4d55; }
.combo { height: 23px; justify-content: flex-end; padding-right: 5px; border: 1px solid #3f4349; background: #32517f; }
.kinds { display: grid; grid-template-columns: repeat(3, 1fr); gap: 1px; height: 60px; background: #26355a; font-size: 20px; }
.kinds button { background: #32517f; }
.kinds .on { background: #50a6de; }
.library { margin-right: -6px; background: #32517f; border-top: 1px solid #44474e; border-right: 1px solid #44474e; position: relative; padding-bottom: 18px; margin-bottom: -18px; }
.library h2 { font-size: 12px; font-weight: 400; height: 28px; line-height: 31px; padding-left: 6px; }
.shelf { display: flex; }
.cells { flex: 1; display: grid; grid-template-columns: repeat(5, 1fr); gap: 2px; padding: 6px 6px 25px; background: #1e1e1e; }
.cells li { height: 104px; padding: 3px 0; background: #2d2d30; display: flex; flex-direction: column; align-items: center; font-size: 11px; font-weight: 600; text-align: center; white-space: nowrap; }
.cells svg { margin: auto; }
.tag { font-size: 18px; font-weight: 700; text-anchor: middle; fill: #25252a; }
.scroll { width: 17px; padding-top: 6px; display: flex; justify-content: center; background: #32517f; }
.scroll.tall { flex-direction: column; justify-content: space-between; align-items: center; padding: 6px 0 5px; }
.imgacts { position: relative; height: 48px; display: grid; grid-template-rows: 1fr 1fr; }
.props h2 { display: flex; align-items: center; gap: 11px; height: 25px; padding-left: 8px; font-size: 12px; font-weight: 600; background: #252525; border-top: 2px solid #3c3f45; border-bottom: 1px solid #44474e; }
.prop { display: flex; height: 25px; border-bottom: 1px solid #3f4a5e; }
.prop label { width: 145px; padding-left: 3px; line-height: 24px; border-right: 1px solid #3f4a5e; }
.prop input { flex: 1; margin: 1px 2px; padding: 0 6px; background: #1e1e1e; border: 1px solid #3f3f46; }
.prop input:disabled { background: #252525; color: #76787c; }
.rowmax { margin-top: auto; height: 26px; line-height: 25px; font-size: 12px; font-weight: 600; padding-left: 5px; border: 1px solid #6b6e73; }
.rowset { display: grid; grid-template-columns: 1fr 1fr; gap: 1px; height: 24px; padding-bottom: 1px; background: #26355a; }
.combo.dim { background: #2d2d30; }
.num { display: flex; align-items: center; flex: 1; background: #1e1e1e; border: 1px solid #3f3f46; padding-right: 3px; }
.num input { flex: 1; width: 20px; }
.tree { width: 245px; padding-left: 1px; background: #253154; flex: none; }
.find { display: flex; gap: 1px; height: 24px; }
.find input { flex: 1; padding-left: 4px; background: #32517f; font-style: italic; }
.find input::placeholder { color: #a5adba; opacity: 1; }
.find button { width: 24px; background: #32517f; }
.tree ul { padding-top: 1px; }
.tree li { display: flex; align-items: center; gap: 5px; height: 28px; margin-left: 40px; padding-left: 7px; font-size: 12px; }
.tree .root { margin-left: 0; padding-left: 7px; gap: 4px; }
.tree .root svg + svg { margin-left: 8px; }
.tree .sel { background: #3f3f46; }

/* floor plan; nodes sit on a free canvas */
.canvas { flex: 1; position: relative; margin-right: 3px; background: linear-gradient(90deg, #3f4d69 1px, transparent 1px) 44px 50px / 61px 61px, linear-gradient(#3f4d69 1px, transparent 1px) 44px 50px / 61px 61px, #28385a; }
.scene { position: absolute; left: 0; top: 0; }
.scene text { font-size: 11px; font-weight: 600; fill: #fff; text-anchor: middle; }
.update { position: absolute; left: 1px; top: 0; width: 135px; height: 60px; background: #50a6de; font-size: 18px; }
.badge { position: absolute; left: 2px; top: 88px; width: 42px; height: 40px; border: 1px solid #3a3f52; border-radius: 0 6px 6px 0; background: #28385a; }
.hint { position: absolute; left: 140px; bottom: 4px; color: #c6c8cc; }
.tools { position: absolute; right: 0; bottom: 0; display: flex; gap: 2px; padding: 3px; background: #2f3c5c; border: 1px solid #3f4658; }
.tools button { width: 22px; height: 22px; background: #2d2d30; color: #fff; }
.popup { position: absolute; left: 428px; top: 312px; width: 242px; height: 298px; background: #1e1e1e; border: 1px solid #3f3f46; }
.popup::before { content: ""; position: absolute; left: -7px; top: 140px; border: 7px solid transparent; border-right-color: #2d2d30; border-left: 0; }
.poptabs { display: grid; grid-template-columns: 49px 53px 53px 49px 1fr; height: 34px; padding: 5px 0 0 5px; background: #2d2d30; border-bottom: 2px solid #0a78c4; font-size: 11px; font-weight: 600; }
.poptabs button { background: #344b76; border: 1px solid #7a7a7c; height: 29px; }
.poptabs .on { background: #076db8; border: 0; }
.poptabs .popx { background: none; border: 0; color: #b0b0b0; }
.popbody { padding: 15px 15px 0; display: grid; gap: 10px; }
.field { display: flex; align-items: center; gap: 9px; height: 22px; }
.field .num { height: 22px; padding-right: 4px; gap: 9px; }
.field input { text-align: right; }
.ic { box-shadow: inset 0 0 0 2px #3399ff; border-radius: 3px; fill: none; stroke: #3399ff; stroke-width: 2; }
.ic text { font-size: 11px; text-anchor: middle; fill: #3399ff; stroke: none; }
.popbody hr { border: 0; border-top: 1px dashed #a0a0a0; margin: 5px 0; }
.modes { display: grid; grid-template-columns: 100px 70px 76px 95px 92px 132px 107px 78px 80px 1fr; gap: 1px; height: 35px; padding: 0 3px 3px 2px; background: #253154; font-weight: 600; }
.modes button { background: #32517f; }
.modes .first { font-size: 13px; }
.modes .on { background: #46a0dc; }
.status { display: flex; align-items: center; justify-content: flex-end; gap: 5px; padding-right: 72px; margin-left: -1px; border-top: 1px solid #0a78c4; color: #c9ccd2; }
.status i { width: 14px; height: 14px; border-radius: 50%; background: linear-gradient(#7be010, #3f9a08); }

/* Windows taskbar */
.taskbar { display: flex; align-items: center; height: 48px; padding-left: 21px; border-top: 1px solid #b6bcc6; color: #222; background: linear-gradient(90deg, #e3eff8 0, #e2ecf7 16%, #d6daf3 30%, #d3e3fb 42%, #d9def6 52%, #d4dff9 62%, #dadff2 72%, #e2eef8 82%, #e4f0f9 100%); }
.start { margin-right: 13px; }
.tsearch { display: flex; align-items: center; width: 218px; height: 31px; padding: 0 7px 0 10px; gap: 9px; border-radius: 16px; border: 1px solid #d0d8e4; background: #f8fbfe; font-size: 14px; }
.tsearch input { flex: 1; width: 20px; }
.tsearch input::placeholder { color: #5c6066; opacity: 1; }
.apps { display: flex; gap: 4px; margin-left: 5px; }
.apps button { position: relative; width: 40px; height: 40px; border-radius: 4px; }
.apps .run::after { content: ""; position: absolute; left: 17px; bottom: 0; width: 6px; height: 3px; border-radius: 2px; background: #7d828a; }
.apps .alert { background: #eaafae; }
.apps .alert::after { background: #c42b1c; }
.apps .cur { background: #f1f5fd; }
.apps .cur::after { left: 12px; width: 16px; background: #0078d4; }
.cnt { position: absolute; right: 2px; top: 4px; width: 16px; height: 16px; border-radius: 50%; background: #e83c2e; color: #fff; font-size: 10px; font-weight: 400; text-align: center; }
.news { display: flex; align-items: center; gap: 7px; margin-left: auto; width: 130px; white-space: nowrap; }
.newsic { position: relative; }
.newsic .cnt { right: -2px; top: 0; background: #c42b1c; }
.news small { font-size: 11px; color: #666c75; }
.tray { display: flex; align-items: center; gap: 16px; margin-left: 28px; }
.lang { margin-left: 4px; }
.trio { display: flex; gap: 8px; margin-left: 1px; }
.clock { text-align: right; width: 70px; margin-left: 4px; }
.bell { margin: 0 20px 0 8px; }
.second .clock { margin: 0 23px 0 18px; color: #555b63; }

/* Browser chrome */
.browser { flex: 1; display: flex; flex-direction: column; background: #dee1e7; color: #3c4043; min-width: 0; }
.strip { display: flex; align-items: center; height: 40px; padding: 0 18px 0 6px; }
.tabmenu { width: 28px; height: 28px; border-radius: 9px; background: #fff; margin-right: 4px; }
.btabs { display: flex; align-self: stretch; }
.btab { position: relative; display: flex; align-items: center; justify-content: space-between; gap: 8px; width: 238px; padding: 0 15px 0 12px; margin-top: 6px; white-space: nowrap; }
.btab span { flex: 1; }
.btab .fade { mask-image: linear-gradient(90deg, #000 88%, transparent); margin-right: -6px; }
.btab::after { content: ""; position: absolute; right: 0; top: 6px; width: 1px; height: 16px; background: #b4b9c2; }
.btab.last::after, .btab.on::after { display: none; }
.btab.on { background: #fff; border-radius: 9px 9px 0 0; color: #1f1f1f; }
.newtab { margin-left: 10px; }
.strip .winctl { margin-left: auto; gap: 36px; }
.bar { display: flex; align-items: center; height: 46px; padding: 0 21px 0 15px; gap: 22px; background: #fff; border-radius: 8px 8px 0 0; }
.omni { flex: 1; display: flex; align-items: center; height: 34px; padding: 0 16px 0 5px; gap: 16px; border-radius: 17px; background: #ebf0fa; margin: 0 -4px 0 -3px; font-size: 13px; }
.tune { display: grid; place-items: center; width: 26px; height: 28px; border-radius: 13px; background: #fff; margin-right: -10px; }
.omni input { flex: 1; }
.vsep { width: 1px; height: 16px; background: #c3d6f2; }
.avatar { width: 20px; height: 20px; border-radius: 50%; background: #00897b; color: #fff; font-size: 11px; }
.marks { display: grid; grid-template-columns: 84px 24px 92px 94px 71px 107px 86px 69px 105px 92px 82px 81px 108px 77px 97px 72px 93px 101px 120px 1fr; align-items: center; height: 35px; padding: 0 15px 6px 13px; background: #fff; white-space: nowrap; border-bottom: 1px solid #dfe3ea; }
.marks a { display: flex; align-items: center; gap: 6px; }
.more { display: flex; align-items: center; justify-content: flex-end; gap: 18px; }

/* TestRail page */
.testrail { flex: 1; display: flex; flex-direction: column; font-family: Roboto, "Liberation Sans", sans-serif; font-size: 12px; }
.trhead { display: grid; grid-template-columns: 1fr auto; height: 82px; background: #0f3552; color: #fff; }
.brand { display: flex; align-items: center; gap: 15px; padding: 6px 0 0 21px; height: 50px; }
.brand div { border-left: 1px solid #2d5675; padding-left: 8px; font-size: 11px; font-weight: 700; color: #dbe8f2; }
.brand h2 { font-size: 16px; font-weight: 500; line-height: 26px; color: #fff; }
.userbar { display: flex; align-items: center; width: 566px; height: 29px; padding: 0 12px 0 4px; background: #38678a; color: #dbe8f2; font-size: 12px; }
.trsearch { display: flex; align-items: center; width: 143px; height: 24px; padding-left: 5px; background: #e9f1f8; color: #333; border-radius: 2px; }
.trsearch input { flex: 1; }
.userbar button { gap: 6px; height: 16px; padding: 0 8px; border-right: 1px solid #5f8cb0; }
.userbar .far { margin-left: 4px; }
.userbar .gold { color: #f8b92a; }
.gold svg { color: #dbe8f2; }
.soc { display: flex; gap: 11px; margin-left: auto; }
.trnav { grid-column: 1 / 3; display: flex; padding: 0 14px 0 13px; gap: 5px; color: #a9cbe4; align-self: end; font-size: 13px; line-height: 26px; height: 29px; }
.trnav a { padding: 0 11px; }
.trnav .on { color: #fff; border-bottom: 2px solid #fff; height: 28px; }
.trnav .admin { margin-left: auto; }
.trmain { flex: 1; display: flex; background: #e9f1f8; }
.content { flex: 1; min-width: 0; }
.head { display: flex; align-items: center; height: 46px; padding: 0 15px 0 14px; gap: 9px; border-bottom: 1px solid #cfe1ec; }
.tid { padding: 4px 6px 3px; border-radius: 12px; background: #66277c; color: #fff; font-weight: 500; font-size: 12px; margin-top: -6px; }
.head h3 { font-size: 12px; font-weight: 500; color: #1c1c1c; margin-top: -6px; }
.acts { display: flex; align-items: center; gap: 8px; margin: -6px 0 0 auto; }
.pager { display: flex; align-items: center; gap: 7px; height: 18px; padding: 0 5px; border: 1px solid #8fb8d4; border-radius: 9px; background: #d1e2ec; margin-right: 2px; }
.group { display: grid; grid-template-columns: 77px 91px 86px; height: 22px; margin-left: 0; border: 1px solid #a9cadc; background: #fff; }
.group button { gap: 5px; }
.group button + button { border-left: 1px solid #a9cadc; }
.body { padding: 8px 15px 0 14px; }
.crumbs, .rail a { color: #6f9bc6; }
.facts { display: grid; grid-template-columns: repeat(4, 1fr); gap: 11px 1px; margin-top: 14px; padding: 9px 0 8px 9px; background: #f6fbff; border: 1px solid #a9cadc; min-height: 94px; }
.facts dt { font-weight: 500; }
.rule { display: flex; align-items: center; gap: 9px; font-size: 13px; font-weight: 500; line-height: 16px; }
.rule::after { content: ""; flex: 1; height: 1px; background: #7aa9cc; }
.body .rule { margin-top: 19px; }
.step { display: flex; margin: 14px 0 0 27px; }
.no { width: 27px; height: 27px; line-height: 27px; text-align: center; background: #fff; }
.stepbody { flex: 1; display: grid; grid-template-columns: 1fr 1fr; gap: 8px; padding: 13px 4px 19px 9px; background: #fff; min-height: 166px; }
.stepbody > * { border: 1px solid #a9cadc; padding: 3px 5px; line-height: 19px; }
.stepbody ol { list-style: decimal; padding-left: 30px; }
.rtabs { display: flex; gap: 14px; height: 33px; margin-top: 17px; padding-left: 13px; border-bottom: 1px solid #a9cadc; color: #222; font-size: 13px; }
.rtabs a { display: flex; align-items: center; gap: 8px; height: 33px; padding: 0 4px; }
.rtabs .on { border-bottom: 3px solid #1f4563; padding-top: 3px; }
.rtabs b { width: 12px; height: 12px; background: #35678a; color: #fff; border-radius: 2px; font-size: 10px; line-height: 12px; text-align: center; }
.results { height: 102px; margin-top: 16px; background: #fff; border: 1px solid #a9cadc; }
.none { margin-top: 12px; }
.btns { display: flex; gap: 9px; margin-top: 13px; }
.solid { gap: 8px; height: 25px; padding: 0 8px 0 10px; border-radius: 2px; background: #38678a; color: #fff; font-weight: 500; font-size: 12px; }
.rail { position: relative; width: 314px; flex: none; padding: 13px; background: #d1e2ec; border-left: 1px solid #a5c8e0; }
.solid.wide { width: 162px; height: 30px; justify-content: flex-start; margin-bottom: 9px; }
.rail p { margin: 19px 0 21px; }
.solid.prog { height: 26px; margin: 22px 0 0 10px; }
.help { position: absolute; right: 9px; bottom: 9px; }
.help b { position: absolute; left: -13px; top: -4px; width: 26px; height: 26px; line-height: 26px; border-radius: 50%; background: #079270; color: #fff; font-size: 12px; }
```
